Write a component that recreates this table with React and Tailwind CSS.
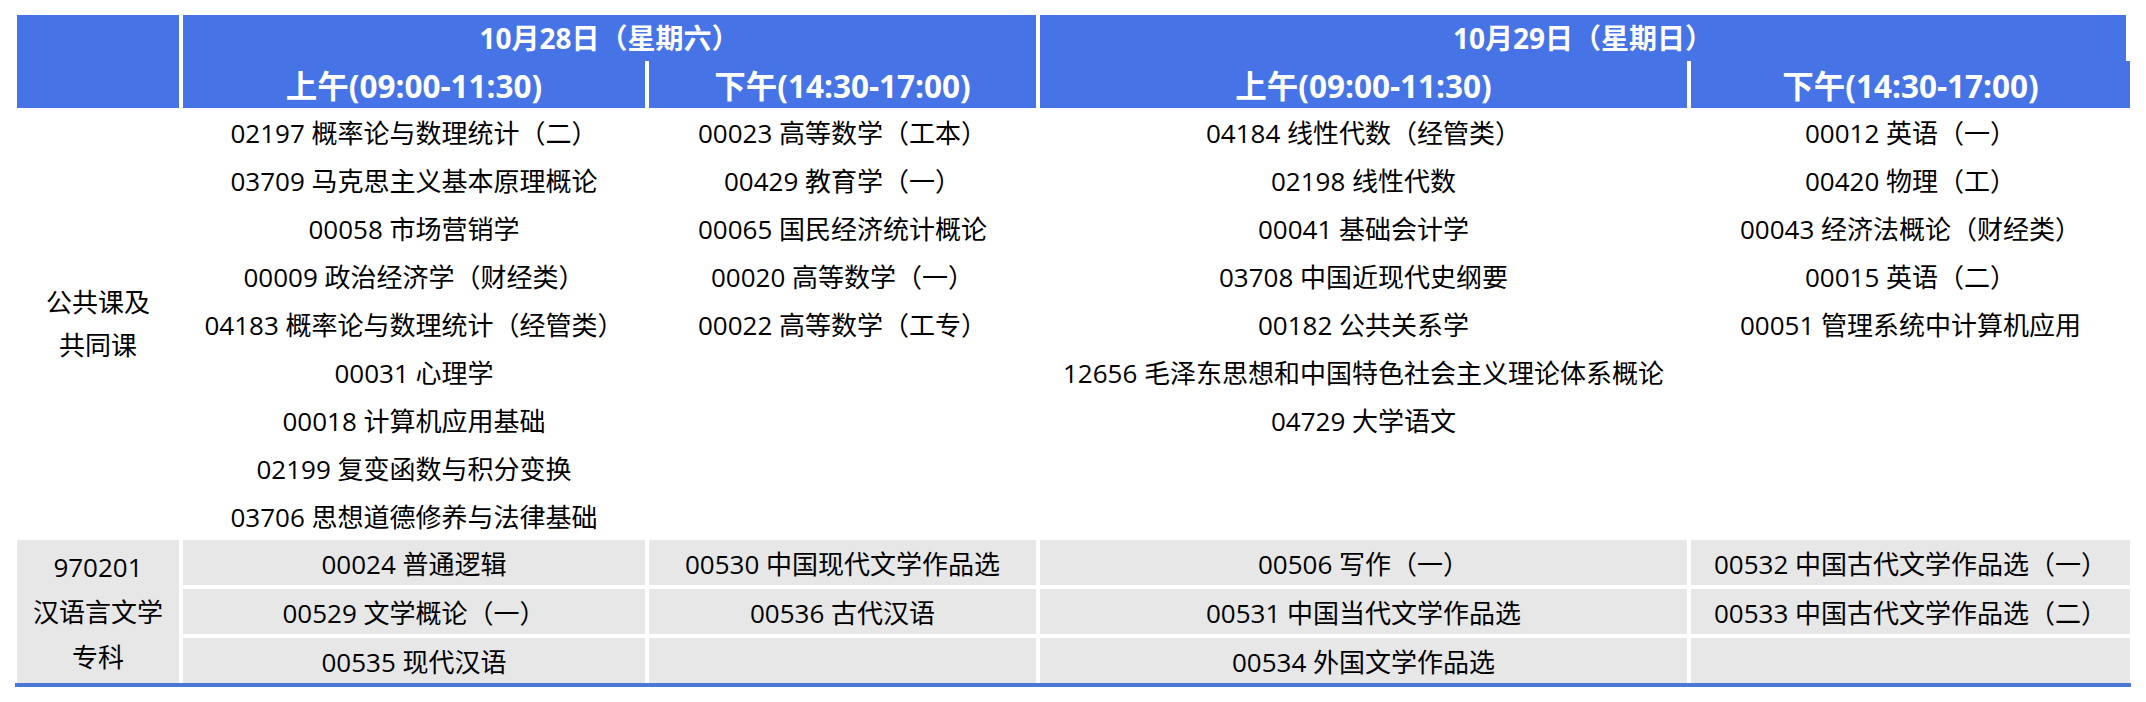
import React from "react";

const day1am = [
  "02197 概率论与数理统计（二）",
  "03709 马克思主义基本原理概论",
  "00058 市场营销学",
  "00009 政治经济学（财经类）",
  "04183 概率论与数理统计（经管类）",
  "00031 心理学",
  "00018 计算机应用基础",
  "02199 复变函数与积分变换",
  "03706 思想道德修养与法律基础",
];
const day1pm = [
  "00023 高等数学（工本）",
  "00429 教育学（一）",
  "00065 国民经济统计概论",
  "00020 高等数学（一）",
  "00022 高等数学（工专）",
];
const day2am = [
  "04184 线性代数（经管类）",
  "02198 线性代数",
  "00041 基础会计学",
  "03708 中国近现代史纲要",
  "00182 公共关系学",
  "12656 毛泽东思想和中国特色社会主义理论体系概论",
  "04729 大学语文",
];
const day2pm = [
  "00012 英语（一）",
  "00420 物理（工）",
  "00043 经济法概论（财经类）",
  "00015 英语（二）",
  "00051 管理系统中计算机应用",
];

// 汉语言文学专科 rows, one array per column
const major = [
  ["00024 普通逻辑", "00529 文学概论（一）", "00535 现代汉语"],
  ["00530 中国现代文学作品选", "00536 古代汉语", ""],
  ["00506 写作（一）", "00531 中国当代文学作品选", "00534 外国文学作品选"],
  ["00532 中国古代文学作品选（一）", "00533 中国古代文学作品选（二）", ""],
];

const CourseList = ({ items }) => (
  <div className="flex flex-col">
    {items.map((c, i) => (
      <div key={i} className="h-[48px] pt-[3px] flex items-center justify-center whitespace-nowrap">
        {c}
      </div>
    ))}
  </div>
);

const App = () => {
  return (
    <div className="w-[2146px] h-[702px] bg-white text-black font-['Open_Sans','Noto_Sans_CJK_SC',sans-serif] text-[26px] pt-[15px]">
      <div className="ml-[17px] grid grid-cols-[162px_462px_387px_647px_439px] gap-x-[4px]">
        {/* header */}
        <div className="row-span-2 bg-[#4674e6]" />
        <div className="col-span-2 h-[46px] bg-[#4674e6] text-white font-bold text-[28px] flex items-center justify-center">
          10月28日（星期六）
        </div>
        <div className="col-span-2 h-[46px] mr-[4px] bg-[#4674e6] text-white font-bold text-[28px] flex items-center justify-center">
          10月29日（星期日）
        </div>
        <div className="h-[47px] bg-[#4674e6] text-white font-bold text-[31.5px] flex items-center justify-center pt-[2px]">
          上午(09:00-11:30)
        </div>
        <div className="h-[47px] bg-[#4674e6] text-white font-bold text-[31.5px] flex items-center justify-center pt-[2px]">
          下午(14:30-17:00)
        </div>
        <div className="h-[47px] bg-[#4674e6] text-white font-bold text-[31.5px] flex items-center justify-center pt-[2px]">
          上午(09:00-11:30)
        </div>
        <div className="h-[47px] bg-[#4674e6] text-white font-bold text-[31.5px] flex items-center justify-center pt-[2px]">
          下午(14:30-17:00)
        </div>

        {/* 公共课及共同课 */}
        <div className="h-[432px] flex flex-col items-center justify-center leading-[43px]">
          <span>公共课及</span>
          <span>共同课</span>
        </div>
        <CourseList items={day1am} />
        <CourseList items={day1pm} />
        <CourseList items={day2am} />
        <CourseList items={day2pm} />

        {/* 汉语言文学专科 */}
        <div className="h-[143px] bg-[#e7e7e7] flex flex-col items-center justify-center leading-[45px] pt-[2px]">
          <span>970201</span>
          <span>汉语言文学</span>
          <span>专科</span>
        </div>
        {major.map((col, i) => (
          <div key={i} className="flex flex-col gap-[4px]">
            {col.map((c, j) => (
              <div key={j} className="h-[45px] pt-[3px] bg-[#e7e7e7] flex items-center justify-center whitespace-nowrap">
                {c}
              </div>
            ))}
          </div>
        ))}
      </div>
      <div className="ml-[15px] w-[2116px] h-[4px] bg-[#4a78d6]" />
    </div>
  );
};

export default App;
